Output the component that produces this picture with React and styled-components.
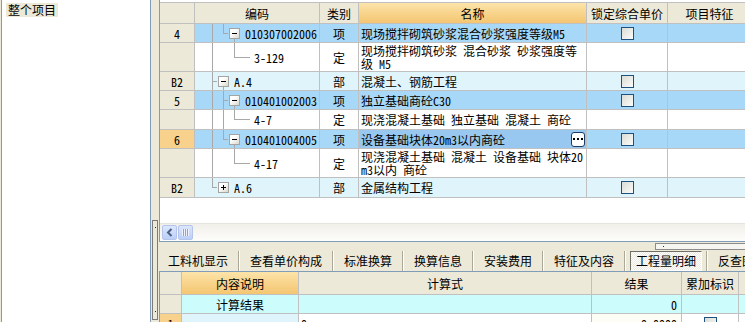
import React from 'react'
import styled, { createGlobalStyle } from 'styled-components'

const BEIGE = '#ece9d8'
const PANEL = '#7f9db9'
const GRID = '#c0c0c0'
const TREE = '#a8a8a8'
const ITEM_BG = '#a8d8f8'
const PART_BG = '#e0f4fc'
const ORANGE_HEAD = 'linear-gradient(#fce4aa, #f8d48c 50%, #f4c672)'

const GlobalStyle = createGlobalStyle`
  html, body {
    margin: 0;
    padding: 0;
    overflow: hidden;
    background: ${BEIGE};
  }
  body {
    font-family: "Noto Sans CJK SC", "Liberation Sans", sans-serif;
    font-size: 12px;
    font-feature-settings: "hwid";
    color: #000;
  }
`

const topCols = '35px 125px 39px 228px 81px 84px'
const bottomCols = '22px 117px 293px 90px 57px 60px'

const topRows = [
  { no: '4', h: 19, bg: ITEM_BG, guides: ['full', 'corner'], box: 'minus', open: true, code: '010307002006', type: '项', name: '现场搅拌砌筑砂浆混合砂浆强度等级M5', check: true },
  { h: 29, bg: '#fff', guides: ['full', 'none', 'corner', 'stub'], code: '3-129', type: '定', name: ['现场搅拌砌筑砂浆 混合砂浆 砂浆强度等', '级 M5'] },
  { no: 'B2', h: 19, bg: PART_BG, guides: ['tee'], box: 'minus', open: true, code: 'A.4', type: '部', name: '混凝土、钢筋工程', check: true },
  { no: '5', h: 19, bg: ITEM_BG, guides: ['full', 'tee'], box: 'minus', open: true, code: '010401002003', type: '项', name: '独立基础商砼C30', check: true },
  { h: 20, bg: '#fff', guides: ['full', 'full', 'corner', 'stub'], code: '4-7', type: '定', name: '现浇混凝土基础 独立基础 混凝土 商砼' },
  { no: '6', current: true, h: 19, bg: ITEM_BG, guides: ['full', 'corner'], box: 'minus', open: true, code: '010401004005', type: '项', name: '设备基础块体20m3以内商砼', check: true, editing: true },
  { h: 29, bg: '#fff', guides: ['full', 'none', 'corner', 'stub'], code: '4-17', type: '定', name: ['现浇混凝土基础 混凝土 设备基础 块体20', 'm3以内 商砼'] },
  { no: 'B2', h: 20, bg: PART_BG, guides: ['corner'], box: 'plus', code: 'A.6', type: '部', name: '金属结构工程', check: true },
]

const tabs = ['工料机显示', '查看单价构成', '标准换算', '换算信息', '安装费用', '特征及内容', '工程量明细', '反查图形工程量']

const lineImg = `linear-gradient(${TREE}, ${TREE})`
const guideBg = {
  none: 'none',
  full: `${lineImg} 6px 0 / 1px 100% no-repeat`,
  tee: `${lineImg} 6px 50% / 5px 1px no-repeat, ${lineImg} 6px 0 / 1px 100% no-repeat`,
  corner: `${lineImg} 6px 50% / 5px 1px no-repeat, ${lineImg} 6px 0 / 1px 50% no-repeat`,
  stub: `${lineImg} 0 50% / 100% 1px no-repeat`,
}

const App = () => {
  return (
    <>
      <GlobalStyle />
      <Screen>
        <LeftPanel>
          <TreeItem>整个项目</TreeItem>
        </LeftPanel>
        <Splitter>
          <SplitThumb>
            <Dot />
            <Dot />
          </SplitThumb>
        </Splitter>
        <RightPane>
          <TopPanel>
            <Grid>
              <Row cols={topCols} h={21}>
                <Cell head />
                <Cell head center>编码</Cell>
                <Cell head center>类别</Cell>
                <Cell head center bg={ORANGE_HEAD}>名称</Cell>
                <Cell head center>锁定综合单价</Cell>
                <Cell head center>项目特征</Cell>
              </Row>
              {topRows.map((r, i) => (
                <Row key={i} cols={topCols} h={r.h}>
                  <Cell head center bg={r.current ? '#f8d28c' : BEIGE}>{r.no}</Cell>
                  <CodeCell bg={r.bg}>
                    {r.guides.map((g, j) => (
                      <Guide key={j} kind={g} />
                    ))}
                    {r.box && (
                      <BoxSlot open={r.open}>
                        <TreeBox>
                          <svg width="9" height="9" viewBox="0 0 9 9">
                            <path d="M2 4.5h5" stroke="#000" strokeWidth="1" />
                            {r.box === 'plus' && <path d="M4.5 2v5" stroke="#000" strokeWidth="1" />}
                          </svg>
                        </TreeBox>
                      </BoxSlot>
                    )}
                    <CodeText leaf={!r.box}>{r.code}</CodeText>
                  </CodeCell>
                  <Cell center bg={r.bg}>{r.type}</Cell>
                  <Cell bg={r.editing ? '#98c8f0' : r.bg} spread={r.editing}>
                    {Array.isArray(r.name) ? (
                      <TwoLines>
                        {r.name[0]}
                        <br />
                        {r.name[1]}
                      </TwoLines>
                    ) : (
                      <span>{r.name}</span>
                    )}
                    {r.editing && (
                      <EllipsisButton>
                        <svg width="10" height="3" viewBox="0 0 10 3">
                          <rect x="0" y="0" width="2" height="2" fill="#000" />
                          <rect x="4" y="0" width="2" height="2" fill="#000" />
                          <rect x="8" y="0" width="2" height="2" fill="#000" />
                        </svg>
                      </EllipsisButton>
                    )}
                  </Cell>
                  <Cell center bg={r.bg}>{r.check && <CheckBox />}</Cell>
                  <Cell bg={r.bg} />
                </Row>
              ))}
            </Grid>
            <HScroll>
              <ScrollButton>
                <svg width="8" height="9" viewBox="0 0 8 9">
                  <path d="M5.5 1L2 4.5L5.5 8" fill="none" stroke="#4d6185" strokeWidth="2" />
                </svg>
              </ScrollButton>
              <ScrollButton>
                <svg width="7" height="7" viewBox="0 0 7 7">
                  <path d="M0.5 0v7M2.5 0v7M4.5 0v7M6.5 0v7" stroke="#eef3ff" strokeWidth="1" />
                  <path d="M1.5 0v7M3.5 0v7M5.5 0v7" stroke="#8ca3d8" strokeWidth="1" />
                </svg>
              </ScrollButton>
            </HScroll>
          </TopPanel>
          <TabArea>
            <MiniBar>
              <Dot />
            </MiniBar>
            <TabStrip>
              {tabs.map((t, i) => (
                <React.Fragment key={t}>
                  {i > 0 && <TabSep />}
                  <Tab active={t === '工程量明细'}>
                    <TabLabel active={t === '工程量明细'}>{t}</TabLabel>
                  </Tab>
                </React.Fragment>
              ))}
            </TabStrip>
          </TabArea>
          <BottomPanel>
            <Row cols={bottomCols} h={23}>
              <Cell head />
              <Cell head center bg={ORANGE_HEAD}>内容说明</Cell>
              <Cell head center>计算式</Cell>
              <Cell head center>结果</Cell>
              <Cell head center>累加标识</Cell>
              <Cell head />
            </Row>
            <Row cols={bottomCols} h={19}>
              <Cell head />
              <Cell center bg="#ccfcfc">计算结果</Cell>
              <Cell bg="#ccfcfc" />
              <Cell right bg="#ccfcfc">0</Cell>
              <Cell bg="#ccfcfc" />
              <Cell bg="#ccfcfc" />
            </Row>
            <Row cols={bottomCols} h={19}>
              <Cell head center bg="#f8d28c">1</Cell>
              <Cell bg={PART_BG} />
              <Cell>0</Cell>
              <Cell right bg="#fdfdf6">0.0000</Cell>
              <Cell center><CheckBox /></Cell>
              <Cell />
            </Row>
          </BottomPanel>
        </RightPane>
      </Screen>
    </>
  )
}

const Screen = styled.div`
  display: flex;
  width: 820px;
  height: 322px;
  overflow: hidden;
`

const LeftPanel = styled.div`
  flex: none;
  width: 144px;
  margin-left: 1px;
  border-left: 1px solid ${PANEL};
  border-right: 1px solid ${PANEL};
  background: #fff;
  padding: 3px 0 0 4px;
  display: flex;
  flex-direction: column;
  align-items: flex-start;
`

const TreeItem = styled.div`
  background: ${BEIGE};
  padding: 0 2px;
  line-height: 14px;
  height: 14px;
`

const Splitter = styled.div`
  flex: none;
  width: 8px;
  padding-top: 220px;
`

const SplitThumb = styled.div`
  width: 6px;
  height: 100px;
  margin-left: 1px;
  box-sizing: border-box;
  border: 1px solid #7b7b7b;
  display: flex;
  flex-direction: column;
  align-items: center;
  justify-content: space-between;
  padding: 6px 0 7px;
`

const Dot = styled.div`
  width: 1px;
  height: 1px;
  background: #1c2c5c;
`

const RightPane = styled.div`
  flex: 1;
  min-width: 0;
  display: flex;
  flex-direction: column;
`

const TopPanel = styled.div`
  flex: none;
  height: 242px;
  box-sizing: border-box;
  border-left: 1px solid ${PANEL};
  border-bottom: 1px solid ${PANEL};
  background: #fff;
  padding-top: 2px;
  display: flex;
  flex-direction: column;
`

const Grid = styled.div`
  border-top: 1px solid ${GRID};
`

const Row = styled.div`
  display: grid;
  grid-template-columns: ${(p) => p.cols};
  height: ${(p) => p.h}px;
  flex: none;
`

const Cell = styled.div`
  box-sizing: border-box;
  border-right: 1px solid ${GRID};
  border-bottom: 1px solid ${GRID};
  background: ${(p) => p.bg || (p.head ? BEIGE : '#fff')};
  display: flex;
  align-items: center;
  justify-content: ${(p) => (p.center ? 'center' : p.right ? 'flex-end' : p.spread ? 'space-between' : 'flex-start')};
  padding: ${(p) => (p.right ? '0 4px 0 2px' : p.spread ? '0 1px 0 2px' : '0 2px')};
  line-height: 13px;
  white-space: nowrap;
  overflow: hidden;
`

const TwoLines = styled.span`
  line-height: 13.5px;
`

const CodeCell = styled.div`
  box-sizing: border-box;
  border-right: 1px solid ${GRID};
  border-bottom: 1px solid ${GRID};
  background: ${(p) => p.bg};
  display: flex;
  align-items: stretch;
  padding-left: 11px;
  line-height: 13px;
  white-space: nowrap;
  overflow: hidden;
`

const Guide = styled.div`
  flex: none;
  width: 11px;
  background: ${(p) => guideBg[p.kind]};
`

const BoxSlot = styled.div`
  flex: none;
  width: 12px;
  display: flex;
  align-items: center;
  background: ${(p) => (p.open ? `${lineImg} 6px 100% / 1px 50% no-repeat` : 'none')};
`

const TreeBox = styled.div`
  width: 11px;
  height: 11px;
  margin-left: 1px;
  box-sizing: border-box;
  border: 1px solid #a4a4a4;
  background: linear-gradient(135deg, #ffffff 35%, #d9d7cc);
  display: flex;
  align-items: center;
  justify-content: center;

  svg {
    display: block;
  }
`

const CodeText = styled.span`
  align-self: center;
  margin-left: ${(p) => (p.leaf ? 4 : 5)}px;
`

const CheckBox = styled.span`
  width: 13px;
  height: 13px;
  box-sizing: border-box;
  border: 1px solid #1c5180;
  background: linear-gradient(135deg, #dcdcd5, #fbfbf9);
`

const EllipsisButton = styled.span`
  flex: none;
  width: 14px;
  height: 15px;
  box-sizing: border-box;
  border: 1px solid #1c3c6c;
  border-radius: 3px;
  background: #fff;
  display: flex;
  align-items: center;
  justify-content: center;

  svg {
    display: block;
  }
`

const HScroll = styled.div`
  margin-top: auto;
  height: 18px;
  box-sizing: border-box;
  border-top: 1px solid #e6e4de;
  background: linear-gradient(#f1efe9, #fdfdfb);
  display: flex;
  align-items: center;
  padding-left: 2px;
  gap: 1px;
`

const ScrollButton = styled.span`
  width: 15px;
  height: 15px;
  box-sizing: border-box;
  border: 1px solid #b4c4ea;
  border-radius: 2px;
  background: linear-gradient(#dde7fd, #bccff8);
  display: flex;
  align-items: center;
  justify-content: center;

  svg {
    display: block;
  }
`

const TabArea = styled.div`
  flex: none;
  height: 29px;
  box-sizing: border-box;
  padding-top: 1px;
  display: flex;
  flex-direction: column;
`

const MiniBar = styled.div`
  margin-left: 496px;
  height: 7px;
  flex: none;
  box-sizing: border-box;
  border: 1px solid #8c8c8c;
  border-right: none;
  background: #f6f5f0;
  display: flex;
  align-items: center;
  padding-left: 7px;
`

const TabStrip = styled.div`
  display: flex;
  align-items: center;
  height: 21px;
  flex: none;
  white-space: nowrap;
`

const Tab = styled.div`
  flex: none;
  padding: 0 ${(p) => (p.active ? 4 : 10)}px;
  height: 21px;
  display: flex;
  align-items: center;

  &:first-child {
    padding-left: 9px;
  }
`

const TabLabel = styled.span`
  line-height: 13px;
  ${(p) =>
    p.active &&
    `
    height: 20px;
    box-sizing: border-box;
    display: flex;
    align-items: center;
    padding: 0 5px;
    border: 1px solid;
    border-color: #716f64 #ffffff #ffffff #716f64;
    background: repeating-conic-gradient(#ffffff 0 25%, #ebe9e0 0 50%) 0 0 / 2px 2px;
  `}
`

const TabSep = styled.span`
  flex: none;
  width: 2px;
  height: 20px;
  box-sizing: border-box;
  border-left: 1px solid #aca899;
  border-right: 1px solid #ffffff;
`

const BottomPanel = styled.div`
  flex: 1;
  min-height: 0;
  border-top: 1px solid ${PANEL};
  border-left: 1px solid ${PANEL};
  background: #fff;
`

export default App
